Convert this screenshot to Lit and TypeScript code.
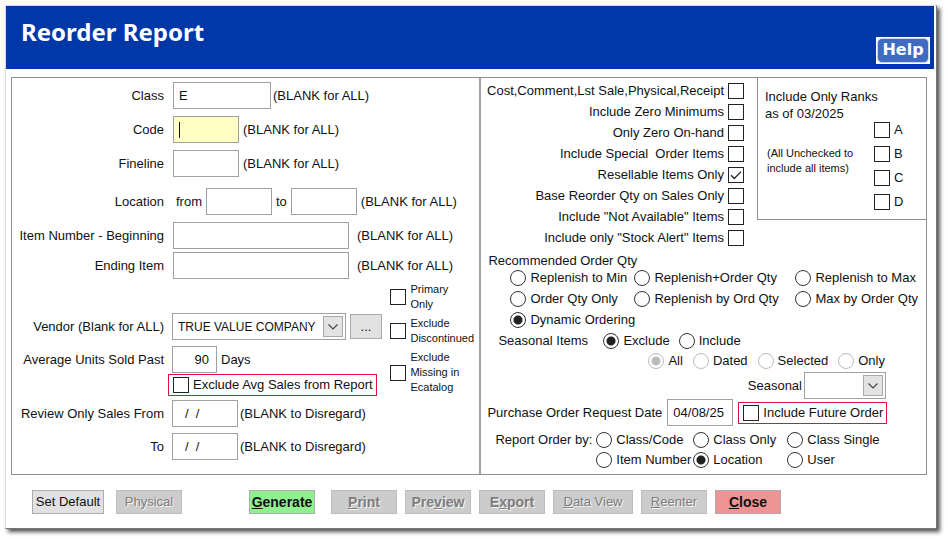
import { LitElement, html, css, svg, nothing } from "lit";
import { customElement } from "lit/decorators.js";
import { classMap } from "lit/directives/class-map.js";

interface Option {
  label: string;
  checked?: boolean;
}

interface Action {
  label: string;
  key?: number;
  kind?: string;
  bold?: boolean;
  disabled?: boolean;
  wide?: string;
}

const FILTERS: Option[] = [
  { label: "Cost,Comment,Lst Sale,Physical,Receipt" },
  { label: "Include Zero Minimums" },
  { label: "Only Zero On-hand" },
  { label: "Include Special \u00a0Order Items" },
  { label: "Resellable Items Only", checked: true },
  { label: "Base Reorder Qty on Sales Only" },
  { label: 'Include "Not Available" Items' },
  { label: 'Include only "Stock Alert" Items' },
];

const ACTIONS: Action[] = [
  { label: "Set Default", wide: "w72" },
  { label: "Physical", disabled: true },
  { label: "Generate", key: 0, kind: "go", bold: true },
  { label: "Print", key: 0, kind: "first", bold: true, disabled: true },
  { label: "Preview", key: 3, bold: true, disabled: true },
  { label: "Export", key: 1, bold: true, disabled: true },
  { label: "Data View", key: 0, disabled: true, wide: "w80" },
  { label: "Reenter", key: 0, disabled: true },
  { label: "Close", key: 0, kind: "close", bold: true },
];

@customElement("app-root")
export class AppRoot extends LitElement {
  static styles = css`
    :host {
      display: block;
      padding: 5px 11px 11px 5px;
      background: #fff;
      color: #111;
      font: 13px/16px "Liberation Sans", Arial, sans-serif;
    }
    * {
      box-sizing: border-box;
    }
    input,
    select,
    button {
      font: inherit;
      color: inherit;
      margin: 0;
      border-radius: 0;
    }
    .window {
      border: 1px solid #dcdcdc;
      border-right-color: #777;
      border-bottom-color: #777;
      padding-right: 2px;
      background: #fff;
      box-shadow: 3px 3px 4px #555;
    }
    header {
      display: flex;
      justify-content: space-between;
      height: 63px;
      padding: 11px 4px 5px 15px;
      background: #0038a8;
    }
    h1 {
      margin: 0;
      color: #fff;
      font: bold 24px/30px "Noto Sans", "Open Sans", sans-serif;
    }
    .help {
      align-self: flex-end;
      width: 54px;
      height: 27px;
      padding: 1px;
      border: 0;
      background: #fff;
      color: #fff;
    }
    .help span {
      display: block;
      height: 25px;
      border: 1px solid #c9d6ee;
      border-radius: 5px;
      background: #3f6cc2;
      font: bold 16px/22px "DejaVu Sans", Verdana, sans-serif;
    }
    main {
      display: grid;
      grid-template-columns: 471fr 446fr;
      min-height: 397px;
      margin: 8px 7px 0 5px;
      border: 1px solid #8e8e92;
    }
    .left {
      border-right: 2px solid #a2a2a6;
      padding: 4px 3px 8px 0;
    }
    .row {
      display: flex;
      align-items: center;
      height: 27px;
      margin-bottom: 7px;
      white-space: nowrap;
    }
    .row.loose {
      margin-bottom: 11px;
    }
    .row.tight {
      margin-bottom: 3px;
    }
    .name {
      flex: none;
      width: 152px;
      margin-right: 9px;
      text-align: right;
    }
    .text {
      flex: none;
      height: 27px;
      border: 1px solid #a0a0a4;
      padding: 0 5px;
      background: #fff;
      outline: 0;
    }
    .w45 {
      width: 45px;
    }
    .w66 {
      width: 66px;
    }
    .w98 {
      width: 98px;
    }
    .w176 {
      width: 176px;
    }
    .right-text {
      text-align: right;
      padding-right: 7px;
    }
    .date {
      padding-left: 12px;
      white-space: pre;
    }
    .active {
      background: linear-gradient(#111, #111) 5px 5px / 1px 16px no-repeat #ffffc4;
    }
    .after {
      margin-left: 2px;
    }
    .after.mid {
      margin-left: 4px;
    }
    .after.far {
      margin-left: 8px;
    }
    .from {
      margin: 0 4px 0 3px;
    }
    .to {
      margin: 0 4px;
    }
    .lower {
      display: grid;
      grid-template-columns: 1fr 86px;
    }
    .fields {
      padding-top: 31px;
    }
    .fields .row {
      margin-bottom: 6px;
    }
    .fields .name {
      margin-right: 8px;
    }
    .fields .row.flush {
      margin-bottom: 1px;
    }
    .combo {
      position: relative;
      display: flex;
      flex: none;
      width: 174px;
      height: 27px;
    }
    .combo.small {
      width: 82px;
    }
    .combo select {
      appearance: none;
      width: 100%;
      border: 1px solid #a0a0a4;
      padding: 0 22px 0 5px;
      background: #fff;
      font-size: 12px;
      outline: 0;
    }
    .combo svg {
      position: absolute;
      top: 3px;
      right: 3px;
      width: 20px;
      height: 21px;
      border: 1px solid #a8a8a8;
      background: #e3e3e3;
      pointer-events: none;
    }
    .more {
      width: 32px;
      height: 25px;
      margin-left: 4px;
      border: 1px solid #a4aab2;
      padding: 0;
      background: #e1e1e1;
    }
    .marked {
      display: inline-flex;
      align-items: center;
      gap: 4px;
      height: 22px;
      border: 1px solid #e0113f;
      padding: 0 3px 0 4px;
      white-space: nowrap;
    }
    .marked.indent {
      display: flex;
      width: fit-content;
      margin: 0 0 4px 156px;
    }
    .box,
    .dot {
      appearance: none;
      flex: none;
      width: 16px;
      height: 16px;
      border: 1px solid #222;
      background: #fff;
    }
    .box:checked {
      background: linear-gradient(45deg, transparent 48%, transparent 52%);
    }
    .tick {
      position: relative;
      display: flex;
      flex: none;
    }
    .tick svg {
      position: absolute;
      inset: 0;
      pointer-events: none;
    }
    .dot {
      border-color: #333;
      border-radius: 50%;
    }
    .dot:checked {
      background: radial-gradient(circle, #222 4px, #fff 5px);
    }
    .dot:disabled {
      border-color: #bbb;
    }
    .dot:disabled:checked {
      background: radial-gradient(circle, #bbb 4px, #fff 5px);
    }
    .side {
      display: flex;
      flex-direction: column;
      gap: 4px;
      font-size: 11px;
      line-height: 15px;
    }
    .side label {
      display: flex;
      align-items: center;
      gap: 4px;
    }
    .side .lines {
      white-space: pre-line;
    }
    .upper {
      display: grid;
      grid-template-columns: 1fr 169px;
    }
    .filters {
      display: flex;
      flex-direction: column;
      align-items: flex-end;
      gap: 5px;
      padding: 5px 13px 0 0;
    }
    .filters label {
      display: flex;
      gap: 4px;
      white-space: nowrap;
    }
    fieldset {
      min-width: 0;
      margin: 0;
      border: 0;
      padding: 0;
    }
    .ranks {
      display: grid;
      grid-template-columns: 1fr 48px;
      align-content: start;
      height: 142px;
      border-left: 1px solid #8e8e92;
      border-bottom: 1px solid #8e8e92;
      padding: 10px 4px 0 7px;
    }
    .ranks .title {
      grid-column: 1 / 3;
      line-height: 17px;
    }
    .ranks .note {
      padding: 24px 0 0 2px;
      font-size: 11px;
      line-height: 15px;
      white-space: nowrap;
    }
    .ranks .letters {
      display: flex;
      flex-direction: column;
      gap: 8px;
    }
    .option {
      display: flex;
      align-items: center;
      gap: 4px;
      white-space: nowrap;
    }
    .caption {
      display: block;
      padding: 7px 0 1px 7px;
    }
    .methods {
      display: grid;
      grid-template-columns: 124px 161px 1fr;
      row-gap: 5px;
      padding-left: 29px;
    }
    .season {
      display: flex;
      gap: 9px;
      padding: 5px 0 0 17px;
    }
    .season .lead {
      width: 96px;
    }
    .scope {
      display: flex;
      gap: 10px;
      padding: 4px 0 0 167px;
    }
    .pick {
      display: flex;
      align-items: center;
      justify-content: flex-end;
      gap: 2px;
      padding: 3px 40px 0 0;
    }
    .request {
      display: flex;
      align-items: center;
      gap: 5px;
      padding-left: 6px;
      white-space: nowrap;
    }
    .order {
      display: grid;
      grid-template-columns: 97px 94px 1fr;
      row-gap: 4px;
    }
    .sorting {
      display: flex;
      gap: 4px;
      padding: 6px 0 0 14px;
      white-space: nowrap;
    }
    .sorting .order {
      flex: 1;
    }
    footer {
      display: flex;
      gap: 8px;
      padding: 15px 26px 14px;
    }
    .action {
      width: 66px;
      height: 24px;
      border: 1px solid #adadad;
      padding: 0;
      background: #e1e1e1;
      white-space: nowrap;
      overflow: hidden;
    }
    .action.w72 {
      width: 72px;
      margin-right: 4px;
    }
    .action.w80 {
      width: 80px;
    }
    .action.bold {
      font-weight: bold;
      font-size: 14px;
    }
    .action:disabled {
      border-color: #bdbdbd;
      background: #cccccc;
      color: #7d7d7d;
      text-shadow: 1px 1px #f4f4f4;
    }
    .action.go {
      margin-left: 59px;
      background: #90f090;
    }
    .action.first {
      margin-left: 8px;
    }
    .action.close {
      background: #ee9494;
    }
  `;

  private chevron() {
    return html`<svg viewBox="0 0 18 19" aria-hidden="true">
      ${svg`<path d="M4.5 7.5 9 12l4.5-4.5" fill="none" stroke="#444" stroke-width="1.2" />`}
    </svg>`;
  }

  private checkbox(id: string, checked = false) {
    return html`<span class="tick">
      <input class="box" type="checkbox" id=${id} .checked=${checked} />
      ${checked
        ? html`<svg width="16" height="16" viewBox="0 0 16 16" aria-hidden="true">
            <path d="M3 8.2 6.3 11.5 13 4.6" fill="none" stroke="#222" stroke-width="1.3" />
          </svg>`
        : nothing}
    </span>`;
  }

  private radio(group: string, label: string, checked = false, disabled = false) {
    return html`<label class="option">
      <input class="dot" type="radio" name=${group} .checked=${checked} ?disabled=${disabled} />
      ${label}
    </label>`;
  }

  private entry(id: string, label: string, size: string, hint: string, hintGap = "", row = "", value = "") {
    return html`<div class="row ${row}">
      <label class="name" for=${id}>${label}</label>
      <input class="text ${size}" id=${id} .value=${value} />
      <span class="after ${hintGap}">${hint}</span>
    </div>`;
  }

  private sideCheck(id: string, label: string) {
    return html`<label for=${id}>${this.checkbox(id)}<span class="lines">${label}</span></label>`;
  }

  private action(a: Action) {
    const k = a.key;
    const classes = {
      action: true,
      bold: !!a.bold,
      [a.kind ?? "plain"]: true,
      [a.wide ?? "normal"]: true,
    };
    return html`<button class=${classMap(classes)} ?disabled=${!!a.disabled}>${k === undefined
      ? a.label
      : html`${a.label.slice(0, k)}<u>${a.label[k]}</u>${a.label.slice(k + 1)}`}</button>`;
  }

  private renderLeft() {
    const all = "(BLANK for ALL)";
    const skip = "(BLANK to Disregard)";
    return html`<section class="left">
      ${this.entry("class", "Class", "w98", all, "", "", "E")}
      ${this.entry("code", "Code", "w66 active", all, "mid")}
      ${this.entry("fineline", "Fineline", "w66", all, "mid", "loose")}
      <div class="row">
        <span class="name">Location</span>
        <label class="from" for="loc-from">from</label>
        <input class="text w66" id="loc-from" />
        <label class="to" for="loc-to">to</label>
        <input class="text w66" id="loc-to" />
        <span class="after mid">${all}</span>
      </div>
      ${this.entry("begin", "Item Number - Beginning", "w176", all, "far", "tight")}
      ${this.entry("end", "Ending Item", "w176", all, "far", "tight")}
      <div class="lower">
        <div class="fields">
          <div class="row">
            <label class="name" for="vendor">Vendor (Blank for ALL)</label>
            <span class="combo">
              <select id="vendor"><option>TRUE VALUE COMPANY</option></select>
              ${this.chevron()}
            </span>
            <button class="more" aria-label="Browse vendors">...</button>
          </div>
          ${this.entry("avg", "Average Units Sold Past", "w45 right-text", "Days", "mid", "flush", "90")}
          <label class="marked indent" for="noavg">
            ${this.checkbox("noavg")}Exclude Avg Sales from Report
          </label>
          ${this.entry("rev-from", "Review Only Sales From", "w66 date", skip, "", "", "/  /")}
          ${this.entry("rev-to", "To", "w66 date", skip, "", "", "/  /")}
        </div>
        <div class="side">
          ${this.sideCheck("primary", "Primary\nOnly")}
          ${this.sideCheck("disc", "Exclude\nDiscontinued")}
          ${this.sideCheck("ecat", "Exclude\nMissing in\nEcatalog")}
        </div>
      </div>
    </section>`;
  }

  private renderRight() {
    return html`<section>
      <div class="upper">
        <div class="filters">
          ${FILTERS.map(
            (f, i) => html`<label for="filter-${i}">${f.label}${this.checkbox(`filter-${i}`, f.checked)}</label>`
          )}
        </div>
        <fieldset class="ranks">
          <div class="title">Include Only Ranks<br />as of 03/2025</div>
          <div class="note">(All Unchecked to<br />include all items)</div>
          <div class="letters">
            ${["A", "B", "C", "D"].map(
              (r) => html`<label class="option" for="rank-${r}">${this.checkbox(`rank-${r}`)}${r}</label>`
            )}
          </div>
        </fieldset>
      </div>
      <fieldset>
        <span class="caption">Recommended Order Qty</span>
        <div class="methods">
          ${this.radio("method", "Replenish to Min")}
          ${this.radio("method", "Replenish+Order Qty")}
          ${this.radio("method", "Replenish to Max")}
          ${this.radio("method", "Order Qty Only")}
          ${this.radio("method", "Replenish by Ord Qty")}
          ${this.radio("method", "Max by Order Qty")}
          ${this.radio("method", "Dynamic Ordering", true)}
        </div>
      </fieldset>
      <fieldset class="season">
        <span class="lead">Seasonal Items</span>
        ${this.radio("season", "Exclude", true)} ${this.radio("season", "Include")}
      </fieldset>
      <fieldset class="scope">
        ${this.radio("scope", "All", true, true)} ${this.radio("scope", "Dated", false, true)}
        ${this.radio("scope", "Selected", false, true)} ${this.radio("scope", "Only", false, true)}
      </fieldset>
      <div class="pick">
        <label for="seasonal">Seasonal</label>
        <span class="combo small">
          <select id="seasonal"><option></option></select>
          ${this.chevron()}
        </span>
      </div>
      <div class="request">
        <label for="po-date">Purchase Order Request Date</label>
        <input class="text w66" id="po-date" .value=${"04/08/25"} />
        <label class="marked" for="future">${this.checkbox("future")}Include Future Order</label>
      </div>
      <fieldset class="sorting">
        <span>Report Order by:</span>
        <div class="order">
          ${this.radio("sort", "Class/Code")} ${this.radio("sort", "Class Only")}
          ${this.radio("sort", "Class Single")} ${this.radio("sort", "Item Number")}
          ${this.radio("sort", "Location", true)} ${this.radio("sort", "User")}
        </div>
      </fieldset>
    </section>`;
  }

  render() {
    return html`<div class="window">
      <header>
        <h1>Reorder Report</h1>
        <button class="help"><span>Help</span></button>
      </header>
      <main>${this.renderLeft()}${this.renderRight()}</main>
      <footer>${ACTIONS.map((a) => this.action(a))}</footer>
    </div>`;
  }
}
